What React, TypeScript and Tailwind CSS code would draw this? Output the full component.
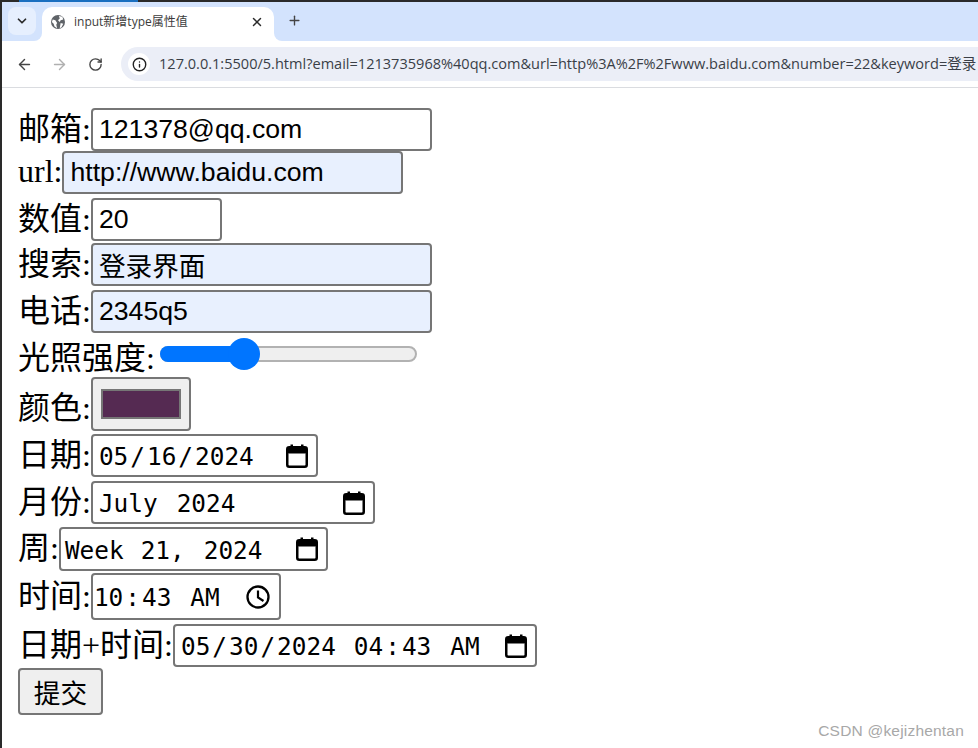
import React from 'react';
import { ArrowLeft, ArrowRight, ChevronDown, Info, Plus, RotateCw, X } from 'lucide-react';

const SANS = "font-['Liberation_Sans','Noto_Sans_CJK_SC',sans-serif]";
const URL_TEXT = '127.0.0.1:5500/5.html?email=1213735968%40qq.com&url=http%3A%2F%2Fwww.baidu.com&number=22&keyword=登录';

const Globe = () => (
  <svg width="14" height="14" viewBox="0 0 16 16">
    <circle cx="8" cy="8" r="8" fill="#5f6368" />
    <path d="M2 5l3 1 2 3-1 2 1 4-3-2-1-3-2-2zM9 1l4 1 1 3-3 1-1 2-2-2 2-2zM11 9l3 1-2 4-2 1z" fill="#fff" />
  </svg>
);

const CalendarIcon = () => (
  <svg width="22" height="24" viewBox="0 0 22 24" className="shrink-0">
    <rect x="1.25" y="3.25" width="19.5" height="19.5" rx="2" fill="none" stroke="#000" strokeWidth="2.5" />
    <rect x="1" y="3" width="20" height="6.5" rx="2" fill="#000" />
    <rect x="4.5" y="0.5" width="2.5" height="4" fill="#000" />
    <rect x="15" y="0.5" width="2.5" height="4" fill="#000" />
  </svg>
);

const ClockIcon = () => (
  <svg width="24" height="24" viewBox="0 0 24 24" className="shrink-0">
    <circle cx="12" cy="12" r="10.5" fill="none" stroke="#000" strokeWidth="2.3" />
    <path d="M12 5.5V12.5L17.5 16" fill="none" stroke="#000" strokeWidth="2.2" />
  </svg>
);

function Browser() {
  return (
    <div className="shrink-0">
      <div className="h-[41px] bg-[#d3e3fd] border-t-2 border-[#2a2a2a] flex items-start relative">
        <div className="mt-[5px] ml-[8px] w-[28px] h-[28px] rounded-lg bg-[#e6effe] flex items-center justify-center">
          <ChevronDown size={14} strokeWidth={3} className="text-[#2b2b2b]" />
        </div>
        <div className="relative mt-[5px] ml-[6px] w-[232px] h-[34px] bg-white rounded-t-[10px] flex items-center pl-[9px] pr-[10px] pb-[4px]">
          {/* flared tab feet */}
          <div className="absolute right-full bottom-0 w-[8px] h-[8px] bg-white">
            <div className="w-full h-full bg-[#d3e3fd] rounded-br-[8px]" />
          </div>
          <div className="absolute left-full bottom-0 w-[8px] h-[8px] bg-white">
            <div className="w-full h-full bg-[#d3e3fd] rounded-bl-[8px]" />
          </div>
          <Globe />
          <span className="ml-[9px] text-[12px] text-[#3c3c3c] font-['Open_Sans','Noto_Sans_CJK_SC',sans-serif]">input新增type属性值</span>
          <X size={14} strokeWidth={2.5} className="ml-auto text-[#2b2b2b]" />
        </div>
        <Plus size={15} strokeWidth={2.2} className="mt-[11px] ml-[13px] text-[#444]" />
      </div>
      <div className="h-[47px] bg-white border-b border-[#dadce0] flex items-center pl-[16px] overflow-hidden">
        <ArrowLeft size={17} strokeWidth={2} className="text-[#444]" />
        <ArrowRight size={17} strokeWidth={2} className="ml-[18px] text-[#b0b0b0]" />
        <RotateCw size={15} strokeWidth={2.2} className="ml-[20px] text-[#444]" />
        <div className="ml-[18px] flex-1 h-[34px] rounded-l-[17px] bg-[#ebeef7] flex items-center pl-[7px] min-w-0">
          <div className="w-[22px] h-[22px] shrink-0 rounded-full bg-white flex items-center justify-center">
            <Info size={15} strokeWidth={2.2} className="text-[#222]" />
          </div>
          <span className="ml-[9px] text-[14.55px] leading-none pb-[1px] text-[#3a3f47] whitespace-nowrap font-['Open_Sans','Noto_Sans_CJK_SC',sans-serif]">{URL_TEXT}</span>
        </div>
      </div>
    </div>
  );
}

const inputBase =
  "border-2 border-[#767676] rounded-[4px] pl-[6px] pr-[5px] h-[43px] text-black text-[26.67px] outline-none " + SANS;

function Row({ label, h, labelClass, children }: { label: React.ReactNode; h: string; labelClass?: string; children: React.ReactNode }) {
  return (
    <div className={`flex items-center ${h}`}>
      <span className={`text-[32px] leading-none font-['Liberation_Serif','Noto_Sans_CJK_SC',serif] text-black whitespace-nowrap pb-[2px] ${labelClass ?? ''}`}>{label}</span>
      {children}
    </div>
  );
}

// date-like fields: each part sits apart the way the browser spaces its edit fields
function MonoField({ className, icon, children }: { className: string; icon: React.ReactNode; children: React.ReactNode }) {
  return (
    <div className={`flex items-center border-2 border-[#767676] rounded-[4px] bg-white text-black text-[24.4px] whitespace-pre pt-[4px] font-['DejaVu_Sans_Mono',monospace] ${className}`}>
      {children}
      <span className="ml-auto flex -mt-[4px]">{icon}</span>
    </div>
  );
}

export default function App() {
  return (
    <div className="w-[978px] h-[748px] overflow-hidden bg-white relative flex flex-col">
      <Browser />
      <form className="pl-[18px] pt-[20px] flex flex-col">
        <Row label="邮箱:" h="h-[43px]">
          <input type="email" readOnly defaultValue="121378@qq.com" className={`${inputBase} w-[341px] bg-white`} />
        </Row>
        <Row label="url:" h="h-[43px]" labelClass="-mt-[2px]">
          <input type="url" readOnly defaultValue="http://www.baidu.com" className={`${inputBase} w-[341px] bg-[#e8f0fe]`} />
        </Row>
        <Row label="数值:" h="h-[43px] mt-[4px]">
          <input type="text" readOnly defaultValue="20" className={`${inputBase} w-[131px] bg-white`} />
        </Row>
        <Row label="搜索:" h="h-[43px] mt-[2px]">
          <input type="text" readOnly defaultValue="登录界面" className={`${inputBase} w-[341px] bg-[#e8f0fe]`} />
        </Row>
        <Row label="电话:" h="h-[43px] mt-[4px]">
          <input type="text" readOnly defaultValue="2345q5" className={`${inputBase} w-[341px] bg-[#e8f0fe]`} />
        </Row>
        <Row label="光照强度:" h="h-[34px] mt-[5px]" labelClass="mt-[8px]">
          <div className="relative ml-[5px] mb-[2px] w-[257px] h-[16px] rounded-full bg-[#efefef] border-2 border-[#b2b2b2]">
            <div className="absolute -left-[2px] -top-[2px] w-[90px] h-[16px] rounded-l-full bg-[#0075ff]" />
            <div className="absolute left-[66px] -top-[10px] w-[32px] h-[32px] rounded-full bg-[#0075ff]" />
          </div>
        </Row>
        <Row label="颜色:" h="h-[54px] mt-[5px]" labelClass="mt-[10px]">
          <div className="w-[100px] h-[54px] border-2 border-[#767676] rounded-[4px] bg-[#efefef] flex items-center justify-center">
            <div className="w-[80px] h-[30px] border-2 border-[#767676] bg-[#552a52]" />
          </div>
        </Row>
        <Row label="日期:" h="h-[43px] mt-[3px]">
          <MonoField className="w-[227px] h-[43px] pl-[6px] pr-[8px]" icon={<CalendarIcon />}>
            <span>05</span><span className="ml-[2px]">/</span><span className="ml-[2px]">16</span><span className="ml-[2px]">/</span><span className="ml-[2px]">2024</span>
          </MonoField>
        </Row>
        <Row label="月份:" h="h-[43px] mt-[4px]">
          <MonoField className="w-[284px] h-[43px] pl-[6px] pr-[8px]" icon={<CalendarIcon />}>
            <span>July</span><span className="ml-[19px]">2024</span>
          </MonoField>
        </Row>
        <Row label="周:" h="h-[44px] mt-[3px]">
          <MonoField className="w-[269px] h-[44px] pl-[4px] pr-[8px]" icon={<CalendarIcon />}>
            <span>Week</span><span className="ml-[17px]">21,</span><span className="ml-[19px]">2024</span>
          </MonoField>
        </Row>
        <Row label="时间:" h="h-[47px] mt-[2px]">
          <MonoField className="w-[190px] h-[47px] pl-[1px] pr-[9px]" icon={<ClockIcon />}>
            <span>10</span><span className="ml-[2px]">:</span><span className="ml-[2px]">43</span><span className="ml-[19px]">AM</span>
          </MonoField>
        </Row>
        <Row label="日期+时间:" h="h-[43px] mt-[4px]">
          <MonoField className="w-[364px] h-[43px] pl-[6px] pr-[8px]" icon={<CalendarIcon />}>
            <span>05</span><span className="ml-[2px]">/</span><span className="ml-[2px]">30</span><span className="ml-[2px]">/</span><span className="ml-[2px]">2024</span>
            <span className="ml-[18px]">04</span><span className="ml-[2px]">:</span><span className="ml-[2px]">43</span><span className="ml-[19px]">AM</span>
          </MonoField>
        </Row>
        <div className="mt-[1px]">
          <button type="button" className="w-[85px] h-[47px] border-2 border-[#767676] rounded-[4px] bg-[#efefef] text-[26.67px] text-black font-['Noto_Sans_CJK_SC',sans-serif]">提交</button>
        </div>
      </form>
      <div className="absolute left-0 top-0 bottom-0 w-[2px] bg-[#2a2a2a]" />
      <div className="absolute left-[19px] top-0 w-[119px] h-[2px] bg-[#1a6fc0]" />
      <span className="absolute right-[14px] top-[719px] text-[15.5px] tracking-[0.2px] text-[#a8a8a8] font-['Liberation_Sans',sans-serif]">CSDN @kejizhentan</span>
    </div>
  );
}
